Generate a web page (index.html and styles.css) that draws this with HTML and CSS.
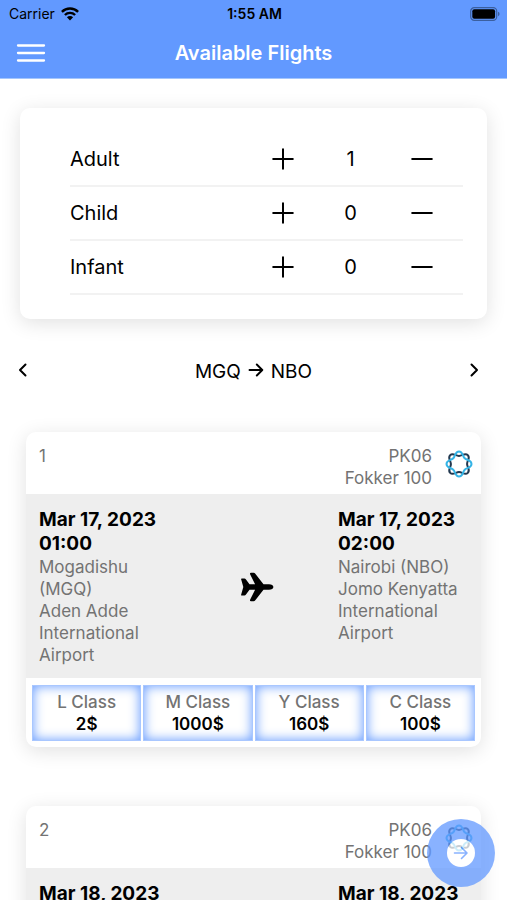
FILE: index.html
```html
<!DOCTYPE html>
<html lang="en">
<head>
<meta charset="utf-8">
<meta name="viewport" content="width=device-width, initial-scale=1">
<title>Available Flights</title>
<link rel="stylesheet" href="styles.css">
</head>
<body>
<svg class="defs" aria-hidden="true">
  <symbol id="plus" viewBox="0 0 22 22"><path d="M11 1.200v19.600M1.200 11h19.600" fill="none" stroke="currentColor" stroke-width="2" stroke-linecap="round"/></symbol>
  <symbol id="minus" viewBox="0 0 22 22"><path d="M1.200 11h19.600" fill="none" stroke="currentColor" stroke-width="2" stroke-linecap="round"/></symbol>
  <symbol id="plane" viewBox="0 0 34 30"><path d="M1.200 7.600q-.4-1 .6-1h2.700q.8 0 1.300.7L9.500 12.200h5.600L10.200 2.400Q9.500.8 11 .8h2.600q1 0 1.700.9L23.500 12.200h5.500c2.600 0 4.400 1.400 4.400 2.800s-1.800 2.800-4.400 2.800h-5.500l-8.200 10.500q-.7.900-1.700.9H11q-1.500 0-.8-1.600l4.900-9.800H9.500l-3.700 4.900q-.5.700-1.300.7H1.800q-1 0-.6-1L3.300 15z"/></symbol>
  <symbol id="airline" viewBox="0 0 28 28">
    <g fill="none" stroke-width="2">
      <path transform="rotate(45 14 14)" stroke="#22384f" d="M26.500 14C26.500 18 22 17.300 19.700 19.700S18 26.500 14 26.500 10.700 22 8.300 19.700 1.500 18 1.500 14 6 10.700 8.300 8.300 10 1.500 14 1.500 17.300 6 19.700 8.300 26.500 10 26.500 14z"/>
      <path stroke="#35b4e6" d="M26.500 14C26.500 18 22 17.300 19.700 19.700S18 26.500 14 26.500 10.700 22 8.300 19.700 1.500 18 1.500 14 6 10.700 8.300 8.300 10 1.500 14 1.500 17.300 6 19.700 8.300 26.500 10 26.500 14z"/>
    </g>
  </symbol>
</svg>

<div class="app">
  <header class="top">
    <div class="status">
      <span class="carrier">Carrier
        <svg width="18" height="14" viewBox="0 0 18 14" aria-hidden="true"><g fill="none" stroke="#000" stroke-width="2.400"><path d="M.9 4.800a11.500 11.500 0 0 1 16.200 0"/><path d="M3.900 8a7.200 7.200 0 0 1 10.200 0"/></g><path d="M9 13.500 5.900 10.300a4.400 4.400 0 0 1 6.200 0z"/></svg>
      </span>
      <span class="clock">1:55 AM</span>
      <svg class="battery" width="30" height="14" viewBox="0 0 30 14" aria-hidden="true"><rect x=".7" y=".7" width="26" height="12.600" rx="3.600" fill="none" stroke="#3b5f9f" stroke-width="1.200"/><rect x="2.300" y="2.300" width="22.800" height="9.400" rx="2"/><path d="M28 4.800q1.600.6 1.600 2.200T28 9.200z" fill="#3b5f9f"/></svg>
    </div>
    <div class="bar">
      <button class="icon-btn" aria-label="Menu"><svg width="30" height="20" viewBox="0 0 30 20"><path d="M2 2.500h26M2 10h26M2 17.500h26" stroke="#fff" stroke-width="2.300" stroke-linecap="round"/></svg></button>
      <h1>Available Flights</h1>
    </div>
  </header>

  <main>
    <section class="card passengers" aria-label="Passengers">
      <div class="row"><span>Adult</span><button class="icon-btn" aria-label="Add adult"><svg width="22" height="22"><use href="#plus"/></svg></button><output>1</output><button class="icon-btn" aria-label="Remove adult"><svg width="22" height="22"><use href="#minus"/></svg></button></div>
      <div class="row"><span>Child</span><button class="icon-btn" aria-label="Add child"><svg width="22" height="22"><use href="#plus"/></svg></button><output>0</output><button class="icon-btn" aria-label="Remove child"><svg width="22" height="22"><use href="#minus"/></svg></button></div>
      <div class="row"><span>Infant</span><button class="icon-btn" aria-label="Add infant"><svg width="22" height="22"><use href="#plus"/></svg></button><output>0</output><button class="icon-btn" aria-label="Remove infant"><svg width="22" height="22"><use href="#minus"/></svg></button></div>
    </section>

    <nav class="route" aria-label="Route">
      <button class="icon-btn" aria-label="Previous"><svg width="10" height="14" viewBox="0 0 10 14"><path d="M7.500 1.500 2 7l5.500 5.500" fill="none" stroke="#000" stroke-width="2" stroke-linecap="round" stroke-linejoin="round"/></svg></button>
      <p>MGQ <svg width="16" height="14" viewBox="0 0 16 14" role="img" aria-label="to"><path d="M1.500 7h12.500M8.800 1.500 14.300 7l-5.500 5.500" fill="none" stroke="#000" stroke-width="1.900" stroke-linecap="round" stroke-linejoin="round"/></svg> NBO</p>
      <button class="icon-btn" aria-label="Next"><svg width="10" height="14" viewBox="0 0 10 14"><path d="M2.500 1.500 8 7l-5.500 5.500" fill="none" stroke="#000" stroke-width="2" stroke-linecap="round" stroke-linejoin="round"/></svg></button>
    </nav>

    <article class="card flight">
      <div class="flight-head">
        <span>1</span>
        <p>PK06<br>Fokker 100</p>
        <svg width="28" height="28" aria-hidden="true"><use href="#airline"/></svg>
      </div>
      <div class="flight-body">
        <div><h2>Mar 17, 2023<br>01:00</h2><p>Mogadishu (MGQ)<br>Aden Adde International Airport</p></div>
        <svg class="plane" width="34" height="30" aria-hidden="true"><use href="#plane"/></svg>
        <div><h2>Mar 17, 2023<br>02:00</h2><p>Nairobi (NBO)<br>Jomo Kenyatta International Airport</p></div>
      </div>
      <div class="fares">
        <button>L Class<b>2$</b></button>
        <button>M Class<b>1000$</b></button>
        <button>Y Class<b>160$</b></button>
        <button>C Class<b>100$</b></button>
      </div>
    </article>

    <article class="card flight">
      <div class="flight-head">
        <span>2</span>
        <p>PK06<br>Fokker 100</p>
        <svg width="28" height="28" aria-hidden="true"><use href="#airline"/></svg>
      </div>
      <div class="flight-body">
        <div><h2>Mar 18, 2023</h2></div>
        <span></span>
        <div><h2>Mar 18, 2023</h2></div>
      </div>
    </article>
  </main>

  <button class="fab" aria-label="Continue"><svg width="28" height="28" viewBox="0 0 28 28"><circle cx="14" cy="14" r="14" fill="#fff"/><path d="M7.500 14h12M14.500 8.500 20 14l-5.500 5.500" fill="none" stroke="#6299ff" stroke-width="1.600" stroke-linecap="round" stroke-linejoin="round"/></svg></button>
</div>
</body>
</html>
```
FILE: styles.css
```css
* { box-sizing: border-box; }

body {
  margin: 0;
  background: #fff;
  color: #000;
  font-family: Inter, "Liberation Sans", sans-serif;
}

h1, h2, p { margin: 0; }
svg { display: block; flex: none; }
button { font: inherit; color: inherit; }
.defs { position: absolute; width: 0; height: 0; }

.icon-btn {
  display: flex;
  padding: 0;
  border: 0;
  background: none;
}

.app {
  display: flex;
  flex-direction: column;
  height: 100vh;
  overflow: hidden;
}

.top {
  flex: none;
  background: #6299ff;
  border-bottom: 1px solid #a4c6fd;
}

.status {
  display: grid;
  grid-template-columns: 1fr auto 1fr;
  align-items: center;
  height: 27px;
  padding: 0 7px 0 9px;
  font-size: 14px;
}

.carrier { display: flex; align-items: center; gap: 6px; }
.clock { font-weight: 600; }
.battery { justify-self: end; }

.bar {
  display: grid;
  grid-template-columns: 1fr auto 1fr;
  align-items: center;
  height: 51px;
  padding: 0 16px;
}

.bar h1 {
  color: #fff;
  font-size: 20px;
  font-weight: 600;
  line-height: 24px;
}

main {
  flex: 1;
  min-height: 0;
  overflow-y: auto;
  scrollbar-width: none;
  padding-top: 29px;
}

.card {
  background: #fff;
  border-radius: 10px;
  box-shadow: 0 4px 20px rgba(0, 0, 0, 0.12);
}

.passengers {
  margin: 0 20px;
  padding: 25px 24px 24px 50px;
}

.row {
  display: grid;
  grid-template-columns: 1fr 22px 117px 22px;
  align-items: center;
  height: 54px;
  padding-right: 30px;
  border-bottom: 2px solid #f2f2f2;
  font-size: 20px;
}

.row output {
  padding-right: 4px;
  text-align: center;
}

.route {
  display: flex;
  justify-content: space-between;
  align-items: center;
  height: 24px;
  margin: 39px 18px 50px;
}

.route .icon-btn { width: 20px; }

.route p {
  display: flex;
  align-items: center;
  gap: 7px;
  padding-top: 4px;
  font-size: 19px;
  line-height: 24px;
}

.route p svg { margin-bottom: 5px; }

.flight {
  margin: 0 26px 59px;
  overflow: hidden;
  color: #737373;
  font-size: 17px;
  line-height: 22px;
}

.flight-head {
  display: flex;
  align-items: flex-start;
  height: 62px;
  padding: 13px 8px 0 13px;
}

.flight-head p {
  margin-left: auto;
  text-align: right;
}

.flight-head svg { margin: 5px 0 0 13px; }

.flight-body {
  display: grid;
  grid-template-columns: 136px 1fr 130px;
  min-height: 184px;
  padding: 14px 13px 12px 13px;
  background: #eee;
}

.flight-body h2 {
  color: #000;
  font-size: 19px;
  font-weight: 700;
  line-height: 24px;
}

.plane {
  place-self: center;
  color: #000;
}

.fares {
  display: grid;
  grid-template-columns: repeat(4, 1fr);
  gap: 2px;
  padding: 7px 6px 6px;
}

.fares button {
  padding: 5px 0;
  border: 1px solid #a9c7ff;
  background: #fff;
  box-shadow: inset 0 0 12px #6299ff;
  font-weight: 500;
}

.fares b {
  display: block;
  color: #000;
  font-weight: 600;
}

.fab {
  position: fixed;
  right: 12px;
  bottom: 13px;
  display: grid;
  place-items: center;
  width: 68px;
  height: 68px;
  padding: 0;
  border: 0;
  border-radius: 50%;
  background: #6299ff;
  opacity: 0.75;
}
```
